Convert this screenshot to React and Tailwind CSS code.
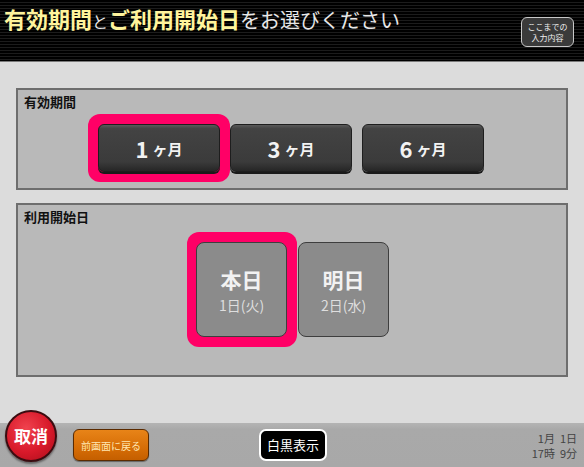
import React from "react";

const jp = { fontFamily: '"Noto Sans CJK JP", "Noto Sans", sans-serif' };

function MonthButton({ n }) {
  return (
    <div className="flex h-[48px] w-[122px] items-center justify-center rounded-[6px] border border-[#1e1e1e] bg-[linear-gradient(180deg,#5a5a5a_0%,#434343_8%,#3b3b3b_80%,#262626_100%)] text-[#f2f2f2] shadow-[0_2px_0_#1a1a1a]">
      <span className="text-[22px] font-bold leading-none">{n}</span>
      <span className="ml-[4px] text-[15px] font-bold leading-none">ヶ月</span>
    </div>
  );
}

function DayButton({ big, small }) {
  return (
    <div className="flex h-[95px] w-[91px] flex-col items-center justify-center gap-[1px] rounded-[8px] border border-[#3e3e3e] bg-[#8b8b8b]">
      <span className="block text-[21px] font-bold leading-[30px] text-[#f2f2f2]">{big}</span>
      <span className="block text-[14px] leading-[20px] text-[#dedede]">{small}</span>
    </div>
  );
}

export default function App() {
  return (
    <div style={jp} className="flex h-[467px] w-[584px] flex-col overflow-hidden bg-[#dcdcdc]">
      {/* Header */}
      <div className="flex h-[62px] shrink-0 items-start justify-between border-b border-[#7a7a7a] bg-[repeating-linear-gradient(180deg,#000_0px,#000_2px,#1c1c1c_2px,#1c1c1c_3px)]">
        <div className="flex items-baseline pl-[4px] pt-[3px] leading-[30px]">
          <span className="text-[22px] font-bold text-[#fff49c]">有効期間</span>
          <span className="text-[16px] text-[#e8e8e8]">と</span>
          <span className="text-[22px] font-bold text-[#fff49c]">ご利用開始日</span>
          <span className="text-[20px] text-[#e8e8e8]">をお選びください</span>
        </div>
        <div className="mr-[10px] mt-[17px] flex h-[30px] w-[53px] flex-col items-center justify-center rounded-[6px] border-[1.5px] border-[#c8c8c8] bg-[#3a3a3a] text-[8px] leading-[11px] text-[#f0f0f0]">
          <span>ここまでの</span>
          <span>入力内容</span>
        </div>
      </div>

      {/* Main */}
      <div className="flex flex-1 flex-col gap-[13px] px-[16px] pt-[26px]">
        <div className="h-[102px] border-2 border-[#6e6e6e] bg-[#b9b9b9]">
          <div className="pl-[6px] pt-[3px] text-[13px] font-bold leading-[17px] text-[#111]">有効期間</div>
          <div className="mt-[4px] flex items-center pl-[70px]">
            <div className="rounded-[12px] bg-[#ff0066] p-[10px]">
              <MonthButton n="1" />
            </div>
            <div>
              <MonthButton n="3" />
            </div>
            <div className="ml-[10px]">
              <MonthButton n="6" />
            </div>
          </div>
        </div>

        <div className="h-[174px] border-2 border-[#6e6e6e] bg-[#b9b9b9]">
          <div className="pl-[6px] pt-[3px] text-[13px] font-bold leading-[17px] text-[#111]">利用開始日</div>
          <div className="mt-[7px] flex items-center pl-[169px]">
            <div className="rounded-[12px] bg-[#ff0066] py-[10px] pl-[9px] pr-[10px]">
              <DayButton big="本日" small="1日(火)" />
            </div>
            <div className="ml-[1px]">
              <DayButton big="明日" small="2日(水)" />
            </div>
          </div>
        </div>
      </div>

      {/* Footer */}
      <div className="flex h-[44px] shrink-0 items-center bg-[linear-gradient(180deg,#b4b4b4_0%,#a9a9a9_15%,#a8a8a8_100%)] pr-[7px]">
        <div className="-mt-[18px] ml-[5px] flex h-[52px] w-[52px] items-center justify-center rounded-full border-2 border-[#3a0c10] bg-[radial-gradient(circle_at_40%_35%,#f0434f_0%,#d8192a_55%,#a80d1a_100%)] text-[17px] font-bold text-white shadow-[0_2px_2px_rgba(0,0,0,0.4)]">
          取消
        </div>
        <div className="ml-[16px] flex h-[32px] w-[76px] items-center justify-center rounded-[6px] border border-[#5a2a00] bg-[linear-gradient(180deg,#e88418_0%,#d66d06_60%,#c45f00_100%)] text-[10px] text-[#ffe6b0] shadow-[0_1px_1px_rgba(0,0,0,0.4)]">
          前画面に戻る
        </div>
        <div className="ml-[110px] flex h-[32px] w-[68px] items-center justify-center rounded-[7px] border-2 border-white bg-black text-[13px] text-white">
          白黒表示
        </div>
        <div className="ml-auto flex flex-col items-end gap-[1px] text-[11px] leading-[14px] text-[#444]">
          <span className="block">1月&nbsp;&nbsp;1日</span>
          <span className="block">17時&nbsp;&nbsp;9分</span>
        </div>
      </div>
    </div>
  );
}
